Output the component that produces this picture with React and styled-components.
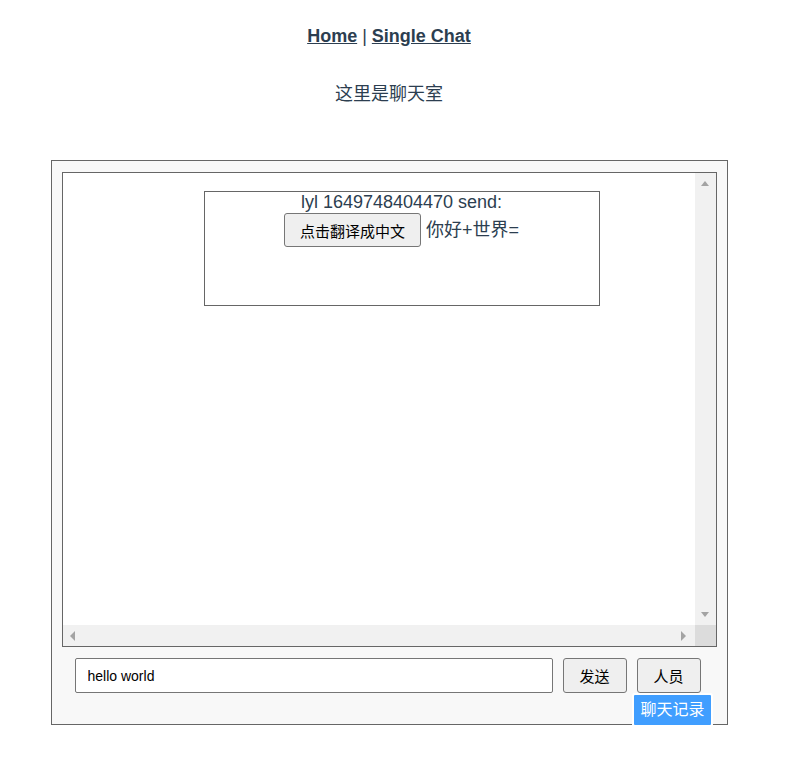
import React, { useState } from "react"
import styled, { createGlobalStyle } from "styled-components"

const GlobalStyle = createGlobalStyle`
  body {
    margin: 8px;
    font-family: "Liberation Sans", Arial, "Noto Sans CJK SC", sans-serif;
    color: #2c3e50;
    background: #fff;
  }
`

const Page = styled.div`
  width: 762px;
  text-align: center;
`

const Nav = styled.div`
  padding-top: 18px;
  font-size: 18px;
  line-height: 21px;
`

const NavLink = styled.a`
  color: #2c3e50;
  font-weight: bold;
  text-decoration: underline;
  cursor: pointer;
`

const Title = styled.div`
  margin: 37px 0 55px;
  font-size: 18px;
  line-height: 21px;
`

const Room = styled.div`
  position: relative;
  box-sizing: border-box;
  width: 677px;
  height: 565px;
  margin: 0 auto;
  padding: 11px 10px 0;
  background: #f8f8f8;
  border: 1px solid #666;
  text-align: left;
`

const ChatBox = styled.div`
  box-sizing: border-box;
  height: 475px;
  border: 1px solid #666;
  background: #fff;
  display: grid;
  grid-template-columns: 1fr 21px;
  grid-template-rows: 1fr 21px;
`

const Messages = styled.div`
  padding-top: 18px;
  overflow: hidden;
`

const Card = styled.div`
  box-sizing: border-box;
  width: 396px;
  height: 115px;
  margin-left: 141px;
  border: 1px solid #666;
  text-align: center;
  font-size: 18px;
  line-height: 21px;
`

const CardRow = styled.div`
  display: flex;
  justify-content: center;
  align-items: center;
  gap: 5px;
`

const Button = styled.button`
  box-sizing: border-box;
  height: ${p => p.$h || 34}px;
  ${p => (p.$w ? `width: ${p.$w}px;` : "")}
  padding: 0 15px;
  background: #efefef;
  border: 1px solid #767676;
  border-radius: 3px;
  color: #000;
  font-family: "Liberation Sans", "Noto Sans CJK SC", sans-serif;
  font-size: 15px;
  cursor: pointer;
`

const Track = styled.div`
  background: #f1f1f1;
  display: flex;
  flex-direction: ${p => (p.$vertical ? "column" : "row")};
  justify-content: space-between;
  align-items: center;
`

const Arrow = styled.div`
  width: 21px;
  height: 21px;
  display: flex;
  align-items: center;
  justify-content: center;
`

const Corner = styled.div`
  background: #dcdcdc;
`

const Composer = styled.div`
  display: flex;
  align-items: center;
  gap: 10px;
  padding: 11px 0 0 13px;
`

const Input = styled.input`
  box-sizing: border-box;
  width: 478px;
  height: 35px;
  padding: 0 12px;
  border: 1px solid #767676;
  border-radius: 2px;
  background: #fff;
  font-family: "Liberation Sans", Arial, sans-serif;
  font-size: 14px;
  color: #000;
  outline: none;
`

const History = styled.div`
  position: absolute;
  right: 14px;
  bottom: -3px;
  box-sizing: border-box;
  height: 34px;
  padding: 0 6px;
  background: #409eff;
  border: 2px solid #fff;
  border-radius: 3px;
  color: #fff;
  font-size: 16px;
  line-height: 30px;
`

const Tri = ({ dir }) => {
  const pts = {
    up: "1,7 5,2 9,7",
    down: "1,2 5,7 9,2",
    left: "7,0 2,5 7,10",
    right: "2,0 7,5 2,10",
  }[dir]
  return (
    <svg width="10" height="10" viewBox="0 0 10 10">
      <polygon points={pts} fill="#a3a3a3" />
    </svg>
  )
}

export default function App() {
  const [text, setText] = useState("hello world")

  return (
    <Page>
      <GlobalStyle />
      <Nav>
        <NavLink>Home</NavLink> | <NavLink>Single Chat</NavLink>
      </Nav>
      <Title>这里是聊天室</Title>
      <Room>
        <ChatBox>
          <Messages>
            <Card>
              <div>lyl 1649748404470 send:</div>
              <CardRow>
                <Button>点击翻译成中文</Button>
                <span>你好+世界=</span>
              </CardRow>
            </Card>
          </Messages>
          <Track $vertical>
            <Arrow><Tri dir="up" /></Arrow>
            <Arrow><Tri dir="down" /></Arrow>
          </Track>
          <Track>
            <Arrow><Tri dir="left" /></Arrow>
            <Arrow><Tri dir="right" /></Arrow>
          </Track>
          <Corner />
        </ChatBox>
        <Composer>
          <Input value={text} onChange={e => setText(e.target.value)} />
          <Button $h={35} $w={64}>发送</Button>
          <Button $h={35} $w={64}>人员</Button>
        </Composer>
        <History>聊天记录</History>
      </Room>
    </Page>
  )
}
